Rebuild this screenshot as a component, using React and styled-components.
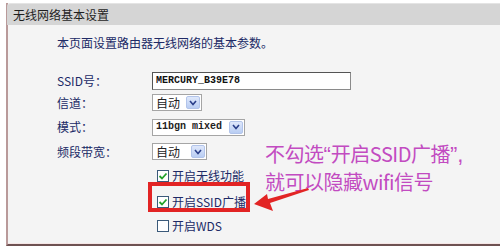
import React from "react";
import styled, { createGlobalStyle } from "styled-components";

const Global = createGlobalStyle`
  html, body { margin: 0; padding: 0; background: #ffffff; }
  body { width: 500px; height: 250px; overflow: hidden; font-family: "Noto Sans CJK SC", "Noto Sans", sans-serif; }
`;

const Panel = styled.div`
  position: relative;
  margin: 3px 0 0 6px;
  width: 494px;
  height: 243px;
  box-sizing: border-box;
  background: #f4f4f4;
  border-left: 2px solid #b99a9a;
  border-bottom: 2px solid #6e5252;
  box-shadow: inset 0 -1px 0 #f6e6e6;
  display: flex;
  flex-direction: column;
`;

const Header = styled.div`
  height: 22px;
  margin-left: -1px;
  padding-left: 6px;
  background: #d5d5d5;
  border-top: 1px solid #e4e4e4;
  border-top-left-radius: 4px;
  color: #1e1e1e;
  font-size: 12px;
  line-height: 21px;
  box-sizing: border-box;
`;

const Body = styled.div`
  padding: 10px 0 0 49px;
  display: flex;
  flex-direction: column;
`;

const Desc = styled.div`
  color: #202a66;
  font-size: 12px;
  line-height: 16px;
  height: 16px;
  margin-bottom: 19px;
`;

const Row = styled.div`
  display: grid;
  grid-template-columns: 95px auto;
  align-items: center;
  height: ${(p) => p.h}px;
`;

const Label = styled.div`
  color: #202a66;
  font-size: 12px;
  line-height: 14px;
`;

const TextInput = styled.div`
  width: 199px;
  height: 18px;
  box-sizing: border-box;
  background: #fff;
  border: 1px solid #8a8a8a;
  border-top-color: #555;
  border-left-color: #555;
  font-family: "Liberation Mono", monospace;
  font-size: 10px;
  line-height: 16px;
  padding-left: 3px;
  color: #111;
  font-weight: bold;
`;

const Select = styled.div`
  width: ${(p) => p.w}px;
  height: 17px;
  box-sizing: border-box;
  background: #fff;
  border: 1px solid #a5a5a5;
  display: flex;
  align-items: center;
  justify-content: space-between;
  padding: 0 1px 0 3px;
`;

const SelectText = styled.span`
  font-family: ${(p) => (p.mono ? '"Liberation Mono", monospace' : '"Noto Sans CJK SC", sans-serif')};
  font-size: ${(p) => (p.mono ? "10px" : "12px")};
  font-weight: ${(p) => (p.mono ? "bold" : "normal")};
  color: #222;
  line-height: 14px;
`;

const DropBtn = styled.span`
  width: 14px;
  height: 13px;
  box-sizing: border-box;
  background: linear-gradient(#dfe8fb, #b9cdf3);
  border: 1px solid #b2c4ea;
  border-radius: 2px;
  display: flex;
  align-items: center;
  justify-content: center;
`;

const CheckItem = styled.div`
  position: relative;
  display: inline-flex;
  align-items: center;
  gap: 3px;
  margin-left: 5px;
  justify-self: start;
  color: #202a66;
  font-size: 12px;
  line-height: 14px;
  ${(p) =>
    p.highlight &&
    `
    &::after {
      content: "";
      position: absolute;
      left: -9px;
      top: -13px;
      width: 102px;
      height: 30px;
      box-sizing: border-box;
      border: 4px solid #e22424;
    }
  `}
`;

const Box = styled.span`
  width: 12px;
  height: 12px;
  box-sizing: border-box;
  background: #fff;
  border: 1px solid #3b5a7a;
  display: inline-flex;
  align-items: center;
  justify-content: center;
`;

const Note = styled.div`
  position: absolute;
  left: 257px;
  top: 137px;
  color: #c24bc1;
  font-family: "Noto Sans CJK SC", sans-serif;
  font-size: 20px;
  line-height: 27px;
  letter-spacing: -0.5px;
  white-space: nowrap;
`;

const Quote = styled.span`
  font-family: "Liberation Sans", sans-serif;
  font-size: 22px;
  letter-spacing: 0;
`;

const Arrow = styled.svg`
  position: absolute;
  left: 238px;
  top: 177px;
`;

const Chevron = () => (
  <svg width="8" height="6" viewBox="0 0 8 6">
    <path d="M1 1 L4 4.5 L7 1" fill="none" stroke="#2a3f8a" strokeWidth="1.6" />
  </svg>
);

const Check = ({ on }) => (
  <Box>
    {on && (
      <svg width="10" height="10" viewBox="0 0 10 10">
        <path d="M1.5 5 L4 7.5 L8.5 2.5" fill="none" stroke="#22a22a" strokeWidth="1.8" />
      </svg>
    )}
  </Box>
);

const Dropdown = ({ w, text, mono }) => (
  <Select w={w}>
    <SelectText mono={mono}>{text}</SelectText>
    <DropBtn>
      <Chevron />
    </DropBtn>
  </Select>
);

export default function App() {
  return (
    <>
      <Global />
      <Panel>
        <Header>无线网络基本设置</Header>
        <Body>
          <Desc>本页面设置路由器无线网络的基本参数。</Desc>
          <Row h={21}>
            <Label>SSID号：</Label>
            <TextInput>MERCURY_B39E78</TextInput>
          </Row>
          <Row h={23}>
            <Label>信道：</Label>
            <Dropdown w={50} text="自动" />
          </Row>
          <Row h={26}>
            <Label>模式：</Label>
            <Dropdown w={93} text="11bgn mixed" mono />
          </Row>
          <Row h={23}>
            <Label>频段带宽：</Label>
            <Dropdown w={55} text="自动" />
          </Row>
          <Row h={26}>
            <span />
            <CheckItem>
              <Check on />
              开启无线功能
            </CheckItem>
          </Row>
          <Row h={26}>
            <span />
            <CheckItem highlight>
              <Check on />
              开启SSID广播
            </CheckItem>
          </Row>
          <Row h={22}>
            <span />
            <CheckItem>
              <Check />
              开启WDS
            </CheckItem>
          </Row>
        </Body>
        <Note>
          不勾选<Quote>“</Quote>开启SSID广播<Quote>”,</Quote>
          <br />
          就可以隐藏wifi信号
        </Note>
        <Arrow width="70" height="40" viewBox="0 0 70 40">
          <path
            d="M8 24 L21 14 L22 19 L62 8 L63 10 L24 23 L27 31 Z"
            fill="#e22424"
          />
        </Arrow>
      </Panel>
    </>
  );
}
